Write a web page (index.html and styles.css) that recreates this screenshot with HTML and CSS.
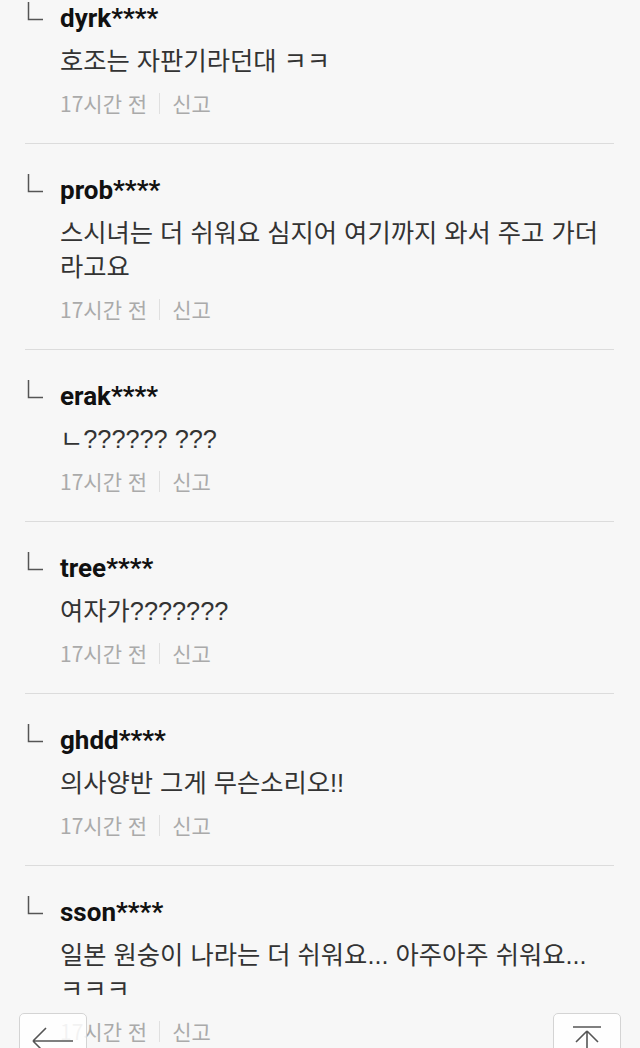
FILE: index.html
```html
<!DOCTYPE html>
<html lang="ko">
<head>
    <meta charset="UTF-8">
    <meta name="viewport" content="width=device-width, initial-scale=1.0">
    <title>댓글</title>
    <link rel="stylesheet" href="styles.css">
</head>
<body>
    <div class="comments">
        <div class="comment">
            <svg class="reply-mark" width="16" height="20" viewBox="0 0 16 20"><path d="M1.5 1 V18.5 H16"/></svg>
            <div class="body">
                <div class="user">dyrk****</div>
                <div class="text">호조는 자판기라던대 ㅋㅋ</div>
                <div class="meta"><span>17시간 전</span><i class="sep"></i><span>신고</span></div>
            </div>
        </div>
        <div class="comment">
            <svg class="reply-mark" width="16" height="20" viewBox="0 0 16 20"><path d="M1.5 1 V18.5 H16"/></svg>
            <div class="body">
                <div class="user">prob****</div>
                <div class="text">스시녀는 더 쉬워요 심지어 여기까지 와서 주고 가더라고요</div>
                <div class="meta"><span>17시간 전</span><i class="sep"></i><span>신고</span></div>
            </div>
        </div>
        <div class="comment">
            <svg class="reply-mark" width="16" height="20" viewBox="0 0 16 20"><path d="M1.5 1 V18.5 H16"/></svg>
            <div class="body">
                <div class="user">erak****</div>
                <div class="text">ㄴ?????? ???</div>
                <div class="meta"><span>17시간 전</span><i class="sep"></i><span>신고</span></div>
            </div>
        </div>
        <div class="comment">
            <svg class="reply-mark" width="16" height="20" viewBox="0 0 16 20"><path d="M1.5 1 V18.5 H16"/></svg>
            <div class="body">
                <div class="user">tree****</div>
                <div class="text">여자가???????</div>
                <div class="meta"><span>17시간 전</span><i class="sep"></i><span>신고</span></div>
            </div>
        </div>
        <div class="comment">
            <svg class="reply-mark" width="16" height="20" viewBox="0 0 16 20"><path d="M1.5 1 V18.5 H16"/></svg>
            <div class="body">
                <div class="user">ghdd****</div>
                <div class="text">의사양반 그게 무슨소리오!!</div>
                <div class="meta"><span>17시간 전</span><i class="sep"></i><span>신고</span></div>
            </div>
        </div>
        <div class="comment">
            <svg class="reply-mark" width="16" height="20" viewBox="0 0 16 20"><path d="M1.5 1 V18.5 H16"/></svg>
            <div class="body">
                <div class="user">sson****</div>
                <div class="text">일본 원숭이 나라는 더 쉬워요... 아주아주 쉬워요... ㅋㅋㅋ</div>
                <div class="meta"><span>17시간 전</span><i class="sep"></i><span>신고</span></div>
            </div>
        </div>
    </div>

    <button class="float-btn back" aria-label="뒤로">
        <svg width="68" height="60" viewBox="0 0 68 60"><path d="M14 28 H54 M14 28 L27 15 M14 28 L27 41"/></svg>
    </button>
    <button class="float-btn top" aria-label="맨 위로">
        <svg width="68" height="60" viewBox="0 0 68 60"><path d="M20 14 H48 M34 18 V50 M34 18 L23 29 M34 18 L45 29"/></svg>
    </button>
</body>
</html>
```

FILE: styles.css
```css
body {
    margin: 0;
    background-color: #f7f7f7;
    font-family: Roboto, "Noto Sans CJK KR", sans-serif;
    overflow: hidden;
}
.comments {
    margin: -28px 26px 0 25px;
}
.comment {
    display: flex;
    padding: 31px 0 25px 0;
    border-bottom: 1px solid #dcdcdc;
}
.reply-mark {
    flex: none;
    margin: -2px 17px 0 2px;
    fill: none;
    stroke: #555;
    stroke-width: 1.5;
}
.body {
    flex: 1;
    min-width: 0;
    margin-right: 6px;
}
.user {
    font-size: 26px;
    line-height: 30px;
    font-weight: bold;
    color: #111;
}
.text {
    margin-top: 11px;
    font-family: "Liberation Sans", "Noto Sans CJK KR", sans-serif;
    font-size: 25.3px;
    line-height: 34px;
    color: #333;
}
.meta {
    display: flex;
    align-items: center;
    margin-top: 10px;
    font-family: "Noto Sans CJK KR", sans-serif;
    font-size: 21px;
    line-height: 30px;
    color: #aaa;
}
.sep {
    width: 1px;
    height: 21px;
    margin: 0 12px;
    background-color: #e0e0e0;
}
.float-btn {
    position: fixed;
    top: 1013px;
    width: 68px;
    height: 60px;
    padding: 0;
    border: 1px solid #d4d4d4;
    border-radius: 5px;
    background-color: rgba(255, 255, 255, 0.85);
}
.float-btn svg {
    display: block;
    margin: -1px;
    fill: none;
    stroke: #555;
    stroke-width: 1.6;
}
.back {
    left: 19px;
}
.top {
    left: 553px;
}
```
